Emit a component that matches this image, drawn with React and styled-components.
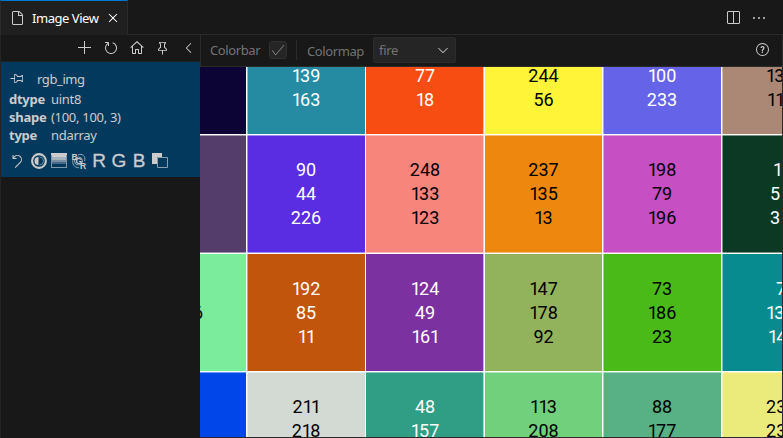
import React from 'react';
import styled, { createGlobalStyle } from 'styled-components';
import {
  VscAdd, VscRefresh, VscHome, VscPinned, VscPin, VscChevronLeft, VscFile, VscClose,
  VscSplitHorizontal, VscEllipsis, VscQuestion, VscCheck, VscChevronDown, VscDiscard,
} from 'react-icons/vsc';

const Global = createGlobalStyle`
  * { box-sizing: border-box; }
  body { margin: 0; background: #181818; overflow: hidden; }
`;

const Window = styled.div`
  width: 783px;
  height: 438px;
  display: flex;
  flex-direction: column;
  background: #181818;
  color: #ccc;
  font: 13px/18px "Noto Sans", "Open Sans", sans-serif;
  white-space: nowrap;
  overflow: hidden;
  svg { flex: none; display: block; }
`;

const TabBar = styled.header`
  height: 35px;
  flex: none;
  display: flex;
  box-shadow: inset 0 -1px #2b2b2b;
`;

const Tab = styled.div`
  width: 128px;
  height: 35px;
  display: flex;
  align-items: center;
  padding: 0 0 0 8px;
  background: #1f1f1f;
  border-top: 1px solid #0078d4;
  border-left: 1px solid #2b2b2b;
  border-right: 1px solid #2b2b2b;
  color: #fff;
`;

const TabTitle = styled.span`
  width: 68px;
  margin: 0 5px 0 7px;
  letter-spacing: -0.45px;
`;

const TabActions = styled.div`
  margin-left: auto;
  display: flex;
  align-items: center;
  gap: 10px;
  padding-right: 16px;
`;

const Body = styled.div`
  flex: 1;
  min-height: 0;
  display: flex;
`;

const Sidebar = styled.aside`
  width: 200px;
  flex: none;
  border-left: 1px solid #242424;
`;

const SideToolbar = styled.div`
  height: 27px;
  display: flex;
  align-items: center;
  justify-content: flex-end;
  gap: 10px;
  padding: 0 3px 1px 0;
  border-bottom: 1px solid #202020;
`;

const ImageItem = styled.section`
  height: 115px;
  padding: 8px 0 0 8px;
  background: #04395e;
  display: flex;
  flex-direction: column;
`;

const ItemHeading = styled.div`
  height: 20px;
  display: flex;
  align-items: flex-start;
  gap: 12px;
  letter-spacing: -0.4px;
`;

const Property = styled.div`
  height: 18px;
  display: grid;
  grid-template-columns: 42px 1fr;
  letter-spacing: -0.3px;
`;

const PropertyName = styled.span`
  font-weight: 700;
  letter-spacing: -0.25px;
`;

const ItemActions = styled.div`
  height: 20px;
  margin-top: 7px;
  display: flex;
  align-items: center;
  gap: 4px;
  svg:first-child { margin-right: 2px; }
`;

const Channel = styled.span`
  width: 16px;
  font: 19px/20px "Liberation Sans", sans-serif;
  text-align: center;
  -webkit-text-stroke: 0.3px #ccc;
`;

const Main = styled.main`
  width: 583px;
  display: flex;
  flex-direction: column;
  border-right: 1px solid #2b2b2b;
  border-bottom: 1px solid #2b2b2b;
`;

const Controls = styled.div`
  height: 32px;
  flex: none;
  display: flex;
  align-items: center;
  padding: 0 11px 2px 9px;
  border-left: 1px solid #2b2b2b;
  border-bottom: 1px solid #2b2b2b;
  color: #747474;
`;

const ControlLabel = styled.span`
  width: ${(p) => p.$width}px;
  letter-spacing: -0.4px;
  padding-top: ${(p) => p.$drop || 0}px;
`;

const Checkbox = styled.div`
  width: 18px;
  height: 18px;
  margin-left: 9px;
  border: 1px solid #303030;
  border-radius: 3px;
  background: #252525;
  color: #777;
`;

const Divider = styled.div`
  width: 1px;
  height: 20px;
  margin: 0 10px 0 9px;
  background: #2b2b2b;
`;

const Select = styled.div`
  width: 83px;
  height: 26px;
  margin-left: 9px;
  padding: 0 4px 0 5px;
  display: flex;
  align-items: center;
  justify-content: space-between;
  background: #252525;
  border: 1px solid #2b2b2b;
  border-radius: 2px;
  letter-spacing: -0.3px;
  svg { color: #bbb; }
`;

const Help = styled.div`
  margin-left: auto;
  color: #ccc;
`;

const PixelGrid = styled.div`
  flex: 1;
  min-height: 0;
  overflow: hidden;
  display: grid;
  grid-template-columns: 46px 119px 119px 118px 119px 61px;
  grid-template-rows: 67px 119px 118px 66px;
`;

const lineShadows = ({ $col, $row }) => [
  [1, 4, 5].includes($col) && 'inset 1px 0 rgba(255, 255, 255, 0.45)',
  $col === 2 && 'inset -1px 0 rgba(255, 255, 255, 0.6)',
  ($row === 1 || $row === 3) && 'inset 0 1px rgba(255, 255, 255, 0.45)',
  $row === 1 && 'inset 0 -1px rgba(255, 255, 255, 0.45)',
].filter(Boolean).join(', ') || 'none';

const Pixel = styled.div`
  min-width: 0;
  background: ${(p) => p.$color};
  color: ${(p) => (p.$dark ? '#000' : '#fff')};
  border: solid #fff;
  border-width: ${(p) => (p.$row ? 1 : 0)}px 0 0 ${(p) => (p.$col ? 1 : 0)}px;
  box-shadow: ${lineShadows};
  padding-top: ${(p) => (p.$row ? 23 : 0)}px;
  font: 18px/24px Roboto, sans-serif;
`;

const Value = styled.div`
  height: 24px;
  text-align: ${(p) => (p.$left === undefined ? 'center' : 'left')};
  margin-left: ${(p) => p.$left || 0}px;
  &:first-child { margin-top: ${(p) => (p.$row ? 0 : -3)}px; }
`;

const One = styled.span`
  letter-spacing: -1.8px;
`;

const Contrast = () => (
  <svg width="16" height="16" viewBox="0 0 16 16">
    <circle cx="8" cy="8" r="6.9" fill="none" stroke="#ccc" strokeWidth="2.1" />
    <path d="M7.5 4a4 4 0 0 0 0 8z" fill="#ccc" />
    <path d="M8.5 4a4 4 0 0 1 0 8" fill="none" stroke="#6689a0" />
  </svg>
);

const Colorbar = () => (
  <svg width="16" height="16" viewBox="0 0 16 16" shapeRendering="crispEdges">
    <path d="M0 0h16v4H0z" fill="#ccc" />
    <path d="M0 4h16v3H0z" fill="#a5b3bd" />
    <path d="M0 7h16v2H0z" fill="#7890a2" />
    <path d="M0 9h16v2H0z" fill="#45698a" />
    <path d="M.5 1.5v13h15v-13" fill="none" stroke="#8298a8" />
  </svg>
);

const SwapChannels = () => (
  <svg
    width="16" height="16" viewBox="0 0 16 16" fill="#ccc"
    fontFamily="Liberation Sans, sans-serif" fontSize="8.5" fontWeight="700"
  >
    <g fill="none" stroke="#94a9b7">
      <path d="M7 2c4-2 8 1 6.6 6M2 7c-1 4 1 7.5 6 7.8" />
      <circle cx="7.5" cy="8" r="4" />
    </g>
    <text x="0.5" y="6.5">B</text>
    <text x="4.5" y="11">G</text>
    <text x="9" y="15.5">R</text>
  </svg>
);

const Overlay = () => (
  <svg width="17" height="16" viewBox="0 0 17 16">
    <path d="M1 0h10v4H6v7H1z" fill="#ccc" />
    <path d="M6.5 4.5h10v10h-10z" fill="none" stroke="#899fae" />
  </svg>
);

const PROPERTIES = [['dtype', 'uint8'], ['shape', '(100, 100, 3)'], ['type', 'ndarray']];

// Each pixel: fill colour, visible channel values, dark text flag, left offsets for partly shown cells.
const PIXELS = [
  ['#0c0434', []],
  ['#258ba3', ['139', '163']],
  ['#f84d12', ['77', '18']],
  ['#fff438', ['244', '56'], true],
  ['#6564e9', ['100', '233']],
  ['#aa8875', ['13', '11'], true, [44, 45]],

  ['#553d6b', []],
  ['#5a2ce2', ['90', '44', '226']],
  ['#f8857b', ['248', '133', '123'], true],
  ['#ed870d', ['237', '135', '13'], true],
  ['#c64fc4', ['198', '79', '196'], true],
  ['#0c3923', ['1', '5', '3'], false, [51, 48, 48]],

  ['#7aec9c', ['', '6', ''], true, [0, -7, 0]],
  ['#c0550b', ['192', '85', '11']],
  ['#7c31a1', ['124', '49', '161']],
  ['#93b25c', ['147', '178', '92'], true],
  ['#49ba17', ['73', '186', '23'], true],
  ['#078b8e', ['7', '13', '14'], false, [54, 44, 46]],

  ['#0046e8', []],
  ['#d3dad3', ['211', '218'], true],
  ['#309d85', ['48', '157']],
  ['#71d07c', ['113', '208'], true],
  ['#58b185', ['88', '177'], true],
  ['#ebeb7b', ['23', '23'], true, [44, 44]],
];

export default function App() {
  return (
    <Window>
      <Global />
      <TabBar>
        <Tab>
          <VscFile size={16} color="#ccc" />
          <TabTitle>Image View</TabTitle>
          <VscClose size={16} />
        </Tab>
        <TabActions>
          <VscSplitHorizontal size={16} />
          <VscEllipsis size={16} />
        </TabActions>
      </TabBar>
      <Body>
        <Sidebar>
          <SideToolbar>
            <VscAdd size={16} />
            <VscRefresh size={16} />
            <VscHome size={16} />
            <VscPinned size={16} />
            <VscChevronLeft size={16} />
          </SideToolbar>
          <ImageItem>
            <ItemHeading>
              <VscPin size={16} />
              <span>rgb_img</span>
            </ItemHeading>
            {PROPERTIES.map(([name, value]) => (
              <Property key={name}>
                <PropertyName>{name}</PropertyName>
                <span>{value}</span>
              </Property>
            ))}
            <ItemActions>
              <VscDiscard size={16} />
              <Contrast />
              <Colorbar />
              <SwapChannels />
              <Channel>R</Channel>
              <Channel>G</Channel>
              <Channel>B</Channel>
              <Overlay />
            </ItemActions>
          </ImageItem>
        </Sidebar>
        <Main>
          <Controls>
            <ControlLabel $width={50}>Colorbar</ControlLabel>
            <Checkbox><VscCheck size={16} /></Checkbox>
            <Divider />
            <ControlLabel $width={57} $drop={2}>Colormap</ControlLabel>
            <Select>fire<VscChevronDown size={16} /></Select>
            <Help><VscQuestion size={16} /></Help>
          </Controls>
          <PixelGrid>
            {PIXELS.map(([color, values, dark, lefts], i) => {
              const row = Math.floor(i / 6);
              return (
                <Pixel key={i} $color={color} $dark={dark} $row={row} $col={i % 6}>
                  {values.map((value, j) => (
                    <Value key={j} $row={row} $left={lefts && lefts[j]}>
                      {[...value].map((d, k) => (d === '1' ? <One key={k}>1</One> : d))}
                    </Value>
                  ))}
                </Pixel>
              );
            })}
          </PixelGrid>
        </Main>
      </Body>
    </Window>
  );
}
